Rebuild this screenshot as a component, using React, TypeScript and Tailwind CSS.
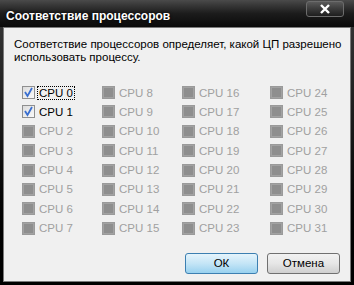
import React from "react";

const cpus = Array.from({ length: 32 }, (_, i) => i);

function CheckBox({ checked, disabled }: { checked?: boolean; disabled?: boolean }) {
  if (disabled) {
    return (
      <span className="w-[13px] h-[13px] shrink-0 border border-[#9a9a9a] bg-[#8e8e8e] shadow-[inset_0_0_0_1px_#a2a2a2]" />
    );
  }
  return (
    <span className="w-[13px] h-[13px] shrink-0 border border-[#8f8f8f] bg-gradient-to-br from-[#dcdcdc] to-[#fafafa] flex items-center justify-center">
      {checked && (
        <svg width="11" height="11" viewBox="0 0 11 11">
          <path d="M2 5 L4.5 9 L9 1" fill="none" stroke="#3a6fd0" strokeWidth="1.8" />
        </svg>
      )}
    </span>
  );
}

export default function App() {
  return (
    <div
      className="w-[354px] h-[285px] bg-gradient-to-b from-[#3a3a3a] via-[#151515] to-[#000] flex flex-col overflow-hidden"
      style={{ fontFamily: "'Liberation Sans', Arial, sans-serif" }}
    >
      {/* title bar */}
      <div className="h-[27px] flex items-start justify-between shrink-0 bg-gradient-to-b from-[#4a4a4a] via-[#1c1c1c] to-[#0a0a0a]">
        <span className="text-white font-bold text-[12px] ml-[6px] mt-[7px] [text-shadow:0_0_3px_#000]">
          Соответствие процессоров
        </span>
        <button className="mt-[1px] mr-[10px] w-[38px] h-[16px] rounded-[3px] border border-[#6c6c6c] bg-gradient-to-b from-[#5a5a5a] to-[#1e1e1e] flex items-center justify-center">
          <svg width="12" height="10" viewBox="0 0 12 10">
            <path d="M2 1 L10 9 M10 1 L2 9" stroke="#fff" strokeWidth="2.4" />
          </svg>
        </button>
      </div>

      {/* client area */}
      <div className="flex-1 mx-[3px] mb-[3px] bg-[#f0f0f0] border border-[#7a7a7a] flex flex-col text-[11.5px] text-black">
        <p className="pl-[10px] pr-0 pt-[10px] leading-[13px]">
          Соответствие процессоров определяет, какой ЦП разрешено использовать процессу.
        </p>

        <div className="grid grid-cols-[80px_80px_88px_auto] grid-rows-8 grid-flow-col mt-[22px] ml-[18px] gap-y-[6.4px]">
          {cpus.map((n) => {
            const enabled = n < 2;
            return (
              <div key={n} className="flex items-center gap-[3px] h-[13px]">
                <CheckBox checked={enabled} disabled={!enabled} />
                <span
                  className={
                    enabled
                      ? n === 0
                        ? "px-[1px] outline outline-1 outline-dotted outline-black leading-[12px]"
                        : "px-[1px] leading-[12px]"
                      : "px-[1px] text-[#a0a0a0] leading-[12px]"
                  }
                >
                  CPU {n}
                </span>
              </div>
            );
          })}
        </div>

        <div className="flex justify-end gap-[9px] mt-auto mb-[7px] mr-[10px]">
          <button className="w-[73px] h-[21px] rounded-[3px] border border-[#3c7fb1] bg-gradient-to-b from-[#e5f4fc] via-[#c4e5f6] to-[#98d1ef] text-[11.5px]">
            ОК
          </button>
          <button className="w-[73px] h-[21px] rounded-[3px] border border-[#707070] bg-gradient-to-b from-[#f2f2f2] via-[#e6e6e6] to-[#cfcfcf] text-[11.5px]">
            Отмена
          </button>
        </div>
      </div>
    </div>
  );
}
